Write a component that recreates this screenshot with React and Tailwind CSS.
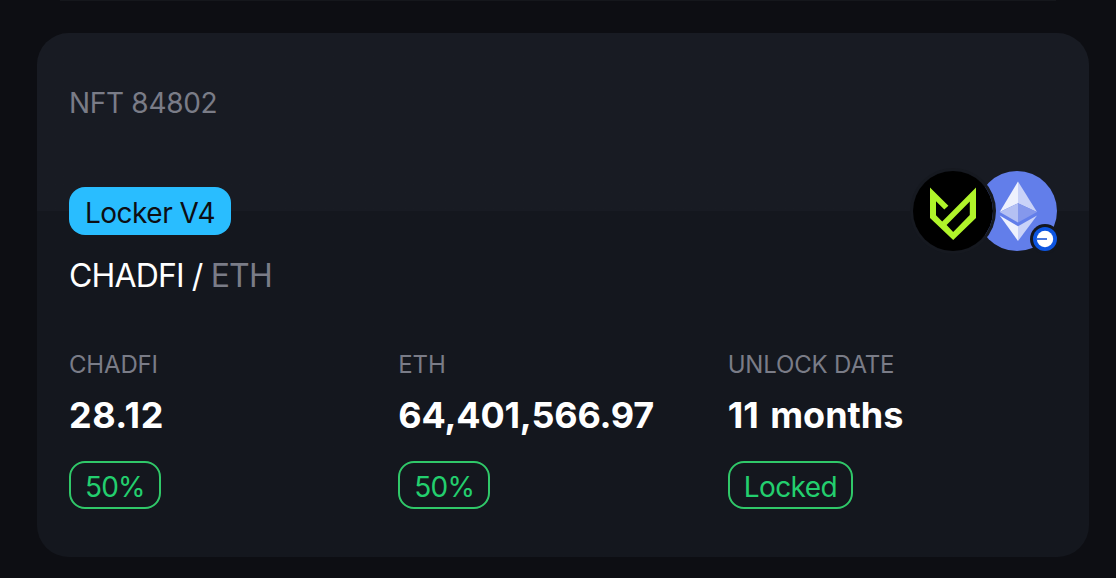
function ChadLogo() {
  return (
    <svg viewBox="0 0 80 80" className="h-20 w-20">
      <circle cx="40" cy="40" r="40" fill="#000" />
      <path
        d="M17 16.5 L17 47 L40.2 69 L63 47 L63 16.5 L29.2 50.4 L23 44.2 L23 30.2 L31.3 38.5 L35.4 34.7 Z M56.8 30.4 L56.8 44 L40.2 61 L33.6 54 Z"
        fill="#b0f42a"
        fillRule="evenodd"
      />
    </svg>
  );
}

function EthLogo() {
  return (
    <svg viewBox="0 0 80 80" className="h-20 w-20">
      <circle cx="40" cy="40" r="40" fill="#627eea" />
      <path d="M41 10.5 L41 32.2 L60 41 Z" fill="#c9d2f8" />
      <path d="M41 10.5 L22.7 41 L41 32.2 Z" fill="#eef1fd" />
      <path d="M41 55.2 L41 70 L60 44.5 Z" fill="#c9d2f8" />
      <path d="M41 70 L41 55.2 L22.7 44.5 Z" fill="#eef1fd" />
      <path d="M41 51.6 L60 41 L41 32.2 Z" fill="#8598ec" />
      <path d="M22.7 41 L41 51.6 L41 32.2 Z" fill="#b4c0f3" />
    </svg>
  );
}

function ChainBadge() {
  return (
    <svg viewBox="0 0 30 30" className="absolute -right-[3px] -bottom-[3px] h-[30px] w-[30px]">
      <circle cx="15" cy="15" r="15" fill="#14171e" />
      <circle cx="15" cy="15" r="12" fill="#0d55e0" />
      <circle cx="15" cy="15" r="8.2" fill="#fff" />
      <path d="M6.5 15 H17" stroke="#3468d8" strokeWidth="1.8" />
    </svg>
  );
}

const stats = [
  { label: "CHADFI", value: "28.12", tag: "50%", spacing: "tracking-[0.5px]", tagSpacing: "tracking-[-0.8px]" },
  { label: "ETH", value: "64,401,566.97", tag: "50%", spacing: "tracking-[-0.2px]", tagSpacing: "tracking-[-0.8px]" },
  { label: "UNLOCK DATE", value: "11 months", tag: "Locked", spacing: "[word-spacing:3px]", tagSpacing: "tracking-[-0.55px]" },
];

export default function App() {
  return (
    <div className="flex h-[578px] w-[1116px] flex-col overflow-hidden bg-[#0d0e13] font-['Inter',sans-serif]">
      <div className="mr-[60px] ml-[60px] h-px shrink-0 bg-[#15171c]" />
      <section className="mt-8 ml-[37px] flex h-[524px] w-[1052px] shrink-0 flex-col rounded-[32px] bg-linear-to-b from-[#181b23] from-34% to-[#14171e] to-34% px-8 pt-[50px]">
        <div className="text-[28px] leading-[41px] tracking-[-0.3px] text-[#7a7c87]">NFT 84802</div>
        <div className="mt-[47px] flex h-20 items-center justify-between">
          <span className="flex h-12 w-[162px] items-center justify-center rounded-[16px] bg-[#29bdff] pt-[3px] text-[28px] tracking-[-0.5px] text-[#0d0e13]">
            Locker V4
          </span>
          <div className="flex">
            <div className="z-10 h-20 w-20 rounded-full shadow-[0_0_0_3px_#161920]">
              <ChadLogo />
            </div>
            <div className="relative -ml-4 h-20 w-20">
              <EthLogo />
              <ChainBadge />
            </div>
          </div>
        </div>
        <h2 className="mt-[5px] text-[32px] leading-10 tracking-[-0.85px] whitespace-pre text-white">
          CHADFI / <span className="text-[#7a7c87]">ETH</span>
        </h2>
        <div className="mt-[53px] grid grid-cols-3">
          {stats.map((s) => (
            <div key={s.label} className="flex flex-col items-start">
              <div className="text-[24px] leading-8 tracking-[-0.17px] text-[#7a7c87]">{s.label}</div>
              <div className={`mt-3.5 text-[36px] leading-10 font-bold text-white ${s.spacing}`}>{s.value}</div>
              <span className={`mt-[26px] flex h-12 items-center rounded-[16px] border-2 border-[#30c869] px-3.5 pt-[3px] text-[28px] text-[#23cf6e] ${s.tagSpacing}`}>
                {s.tag}
              </span>
            </div>
          ))}
        </div>
      </section>
    </div>
  );
}
